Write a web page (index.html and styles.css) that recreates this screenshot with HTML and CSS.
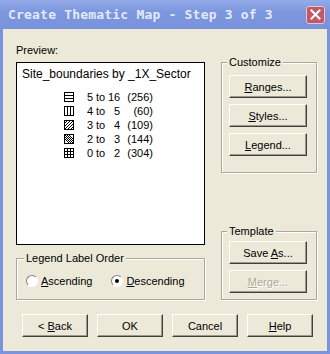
FILE: index.html
```html
<!DOCTYPE html>
<html lang="en">
<head>
  <meta charset="UTF-8" />
  <title>Create Thematic Map - Step 3 of 3</title>
  <link rel="stylesheet" href="styles.css">
</head>
<body>

  <div class="window">
    <div class="titlebar">
      <span class="title">Create Thematic Map - Step 3 of 3</span>
      <span class="close">
        <svg width="11" height="11" viewBox="0 0 11 11"><path d="M1.5 1.5 L9.5 9.5 M9.5 1.5 L1.5 9.5" stroke="#fff" stroke-width="2" stroke-linecap="square"/></svg>
      </span>
    </div>

    <div class="client">
      <div class="main">
        <div class="left">
          <div class="label">Preview:</div>
          <div class="preview">
            <div class="preview-title">Site_boundaries by _1X_Sector</div>
            <div class="rows">
              <div class="row">
                <svg class="swatch" viewBox="0 0 10 10"><rect x="0.5" y="0.5" width="9" height="9"/><path d="M0 3.5 H10 M0 6.5 H10"/></svg>
                <span class="from">5</span><span class="to">to</span><span class="upto">16</span><span class="count">(256)</span>
              </div>
              <div class="row">
                <svg class="swatch" viewBox="0 0 10 10"><rect x="0.5" y="0.5" width="9" height="9"/><path d="M3.5 0 V10 M6.5 0 V10"/></svg>
                <span class="from">4</span><span class="to">to</span><span class="upto">5</span><span class="count">(60)</span>
              </div>
              <div class="row">
                <svg class="swatch" viewBox="0 0 10 10"><rect x="0.5" y="0.5" width="9" height="9"/><path d="M0.5 3.5 L3.5 0.5 M0.5 6.5 L6.5 0.5 M0.5 9.5 L9.5 0.5 M3.5 9.5 L9.5 3.5 M6.5 9.5 L9.5 6.5"/></svg>
                <span class="from">3</span><span class="to">to</span><span class="upto">4</span><span class="count">(109)</span>
              </div>
              <div class="row">
                <svg class="swatch" viewBox="0 0 10 10"><rect x="0.5" y="0.5" width="9" height="9"/><path d="M0.5 2.5 L7.5 9.5 M0.5 0.5 L9.5 9.5 M2.5 0.5 L9.5 7.5 M4.5 0.5 L9.5 5.5 M0.5 4.5 L5.5 9.5"/></svg>
                <span class="from">2</span><span class="to">to</span><span class="upto">3</span><span class="count">(144)</span>
              </div>
              <div class="row">
                <svg class="swatch" viewBox="0 0 10 10"><rect x="0.5" y="0.5" width="9" height="9"/><path d="M0 3.5 H10 M0 6.5 H10 M3.5 0 V10 M6.5 0 V10"/></svg>
                <span class="from">0</span><span class="to">to</span><span class="upto">2</span><span class="count">(304)</span>
              </div>
            </div>
          </div>

          <fieldset class="group order">
            <legend>Legend Label Order</legend>
            <label class="radio"><span class="circle"></span><span><u>A</u>scending</span></label>
            <label class="radio"><span class="circle checked"></span><span><u>D</u>escending</span></label>
          </fieldset>
        </div>

        <div class="right">
          <fieldset class="group customize">
            <legend>Customize</legend>
            <button class="btn"><u>R</u>anges...</button>
            <button class="btn"><u>S</u>tyles...</button>
            <button class="btn"><u>L</u>egend...</button>
          </fieldset>

          <fieldset class="group template">
            <legend>Template</legend>
            <button class="btn">Save <u>A</u>s...</button>
            <button class="btn disabled"><u>M</u>erge...</button>
          </fieldset>
        </div>
      </div>

      <div class="buttons">
        <button class="btn">&lt; <u>B</u>ack</button>
        <button class="btn">OK</button>
        <button class="btn">Cancel</button>
        <button class="btn"><u>H</u>elp</button>
      </div>
    </div>
  </div>

</body>
</html>
```

FILE: styles.css
```css
body {
  margin: 0;
  font-family: 'Liberation Sans', Arial, sans-serif;
  font-size: 11px;
  color: #000;
}

.window {
  width: 330px;
  height: 354px;
  display: flex;
  flex-direction: column;
  background: #7a93df;
}

.titlebar {
  height: 29px;
  display: flex;
  align-items: center;
  justify-content: space-between;
  padding: 0 5px 0 8px;
  background: linear-gradient(#93abe9, #7d97de 40%, #7893dc);
}

.title {
  font-family: 'DejaVu Sans Mono', monospace;
  font-weight: bold;
  font-size: 13px;
  letter-spacing: 0.2px;
  color: #e4eaf9;
}

.close {
  width: 19px;
  height: 18px;
  box-sizing: border-box;
  display: flex;
  align-items: center;
  justify-content: center;
  background: #c05a68;
  border: 1px solid #e6c6d0;
  border-radius: 3px;
}

.client {
  flex: 1;
  margin: 0 3px 3px;
  padding: 15px 10px 0 13px;
  background: #ece9d8;
}

.main {
  display: flex;
  gap: 16px;
  height: 256px;
}

.left {
  width: 189px;
}

.label {
  height: 13px;
  line-height: 13px;
  margin-bottom: 5px;
}

.preview {
  height: 183px;
  box-sizing: border-box;
  background: #fff;
  border: 1px solid #000;
  padding: 4px 5px 0;
}

.preview-title {
  font-size: 12px;
  line-height: 14px;
}

.rows {
  margin: 9px 0 0 42px;
}

.row {
  display: grid;
  grid-template-columns: 23px 7px 14px 12px 33px;
  align-items: center;
  height: 14px;
  line-height: 14px;
}

.swatch {
  width: 10px;
  height: 10px;
  fill: none;
  stroke: #000;
  stroke-width: 1;
}

.to {
  padding-left: 2px;
}

.upto,
.count {
  text-align: right;
}

.group {
  margin: 0;
  border: 1px solid #aca899;
  box-shadow: inset 1px 1px 0 #fff, 1px 1px 0 #fff;
}

.group legend {
  margin-left: -2px;
  padding: 0 2px;
  line-height: 13px;
  background: #ece9d8;
}

.order {
  margin-top: 7px;
  height: 48px;
  box-sizing: border-box;
  padding: 9px 9px 0;
  display: flex;
  align-items: flex-start;
}

.radio {
  display: flex;
  align-items: center;
  gap: 3px;
  height: 13px;
}

.radio + .radio {
  margin-left: 19px;
}

.circle {
  width: 12px;
  height: 12px;
  box-sizing: border-box;
  border-radius: 50%;
  border: 1px solid;
  border-color: #808080 #fff #fff #808080;
  background: #fff;
  display: flex;
  align-items: center;
  justify-content: center;
}

.circle.checked::after {
  content: "";
  width: 4px;
  height: 4px;
  border-radius: 50%;
  background: #000;
}

.right {
  width: 96px;
  padding-top: 12px;
  display: flex;
  flex-direction: column;
  justify-content: space-between;
}

.customize {
  padding: 6px 9px 16px 7px;
}

.template {
  padding: 3px 9px 6px 7px;
}

.btn {
  display: block;
  width: 78px;
  height: 23px;
  padding: 0;
  font-family: inherit;
  font-size: 11px;
  color: #000;
  background: #ece9d8;
  border: 1px solid;
  border-color: #fff #404040 #404040 #fff;
  box-shadow: inset -1px -1px 0 #9d9a8c;
}

.group .btn + .btn {
  margin-top: 6px;
}

.btn.disabled {
  color: #aca899;
  text-shadow: 1px 1px 0 #fff;
}

.buttons {
  display: flex;
  gap: 9px;
  margin: 14px 0 0 6px;
}

.buttons .btn {
  width: 66px;
}
```
